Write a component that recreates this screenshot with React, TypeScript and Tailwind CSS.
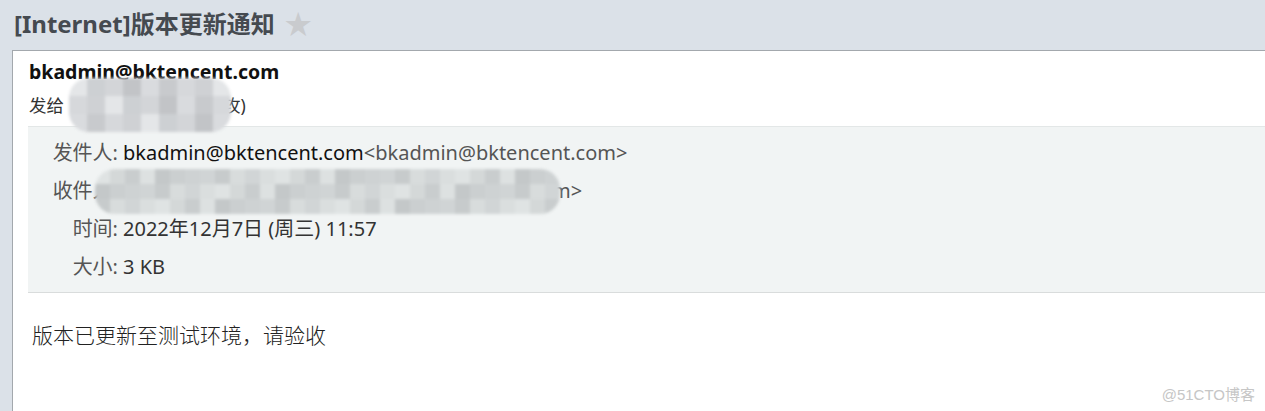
const blurA = ['#e4e6e8', '#cfd1d4', '#d6d8db', '#c8cacd', '#d9dbde', '#c2c4c7', '#d3d5d8', '#cdd0d3']
const blurB = ['#dfe3e3', '#d0d4d5', '#c9cdce', '#d8dcdc', '#c4c8c9', '#dadede', '#ced2d3', '#d4d8d8', '#c7cbcc', '#dde1e1', '#d1d5d6', '#cbcfd0']

function Pixelated({ colors, cols, rows, size, className = '' }: { colors: string[]; cols: number; rows: number; size: number; className?: string }) {
  const cells = Array.from({ length: cols * rows }, (_, i) => colors[(i * 7 + Math.floor(i / cols) * 3) % colors.length])
  return (
    <span
      className={`inline-grid overflow-hidden rounded-[20px] blur-[1.5px] align-middle ${className}`}
      style={{ gridTemplateColumns: `repeat(${cols}, ${size}px)` }}
    >
      {cells.map((c, i) => (
        <span key={i} style={{ width: size, height: size, background: c }} />
      ))}
    </span>
  )
}

function InfoRow({ label, children }: { label: string; children: React.ReactNode }) {
  return (
    <div className="flex h-[38px] items-center">
      <div className="w-[90px] shrink-0 text-right text-[#555]">{label}</div>
      <div className="ml-[5px] flex items-center whitespace-nowrap">{children}</div>
    </div>
  )
}

export default function App() {
  return (
    <div
      className="relative h-[411px] w-[1265px] overflow-hidden bg-[#dbe1e8]"
      style={{ fontFamily: '"Noto Sans", "Noto Sans CJK SC", sans-serif' }}
    >
      {/* Subject */}
      <div className="flex h-[50px] items-center pl-[14px] pb-[3px]">
        <h1 className="text-[24px] font-bold leading-none text-[#454a50]">[Internet]版本更新通知</h1>
        <span className="ml-[10px] text-[27px] leading-none text-[#c9cbce]">★</span>
      </div>

      {/* Mail panel */}
      <div className="ml-[12px] h-[361px] border-l border-t border-[#a3a8ad] bg-white">
        <div className="pl-[16px] pt-[8px]">
          <div className="h-[26px] text-[19.5px] font-bold leading-[26px] text-[#111]">bkadmin@bktencent.com</div>
          <div className="mt-[7px] flex h-[26px] items-center text-[17.5px] text-[#333]">
            <span>发给</span>
            <Pixelated colors={blurA} cols={9} rows={3} size={18} className="-my-[14px] ml-[5px] -mr-[8px]" />
            <span>攻)</span>
          </div>
        </div>

        {/* Header details */}
        <div className="ml-[15px] mt-[8px] h-[167px] border-b border-t border-b-[#d9dcdc] border-t-[#e3e7e7] bg-[#f1f4f4] pt-[7px] text-[20px]">
          <InfoRow label="发件人:">
            <span className="text-[#111]">bkadmin@bktencent.com</span>
            <span className="text-[#555]">&lt;bkadmin@bktencent.com&gt;</span>
          </InfoRow>
          <InfoRow label="收件人:">
            <Pixelated colors={blurB} cols={31} rows={3} size={15} className="-my-[8px] -ml-[28px] -mr-[8px]" />
            <span className="text-[#555]">m&gt;</span>
          </InfoRow>
          <InfoRow label="时间:">
            <span className="text-[#333]">2022年12月7日 (周三) 11:57</span>
          </InfoRow>
          <InfoRow label="大小:">
            <span className="text-[#333]">3 KB</span>
          </InfoRow>
        </div>

        {/* Body */}
        <div className="pl-[19px] pt-[29px] text-[21px] font-light leading-[26px] text-[#222]">版本已更新至测试环境，请验收</div>
      </div>

      <span
        className="absolute bottom-[5px] right-[10px] text-[15px] text-[#c6c6c6]"
        style={{ fontFamily: '"Liberation Sans", "Noto Sans CJK SC", sans-serif' }}
      >
        @51CTO博客
      </span>
    </div>
  )
}
